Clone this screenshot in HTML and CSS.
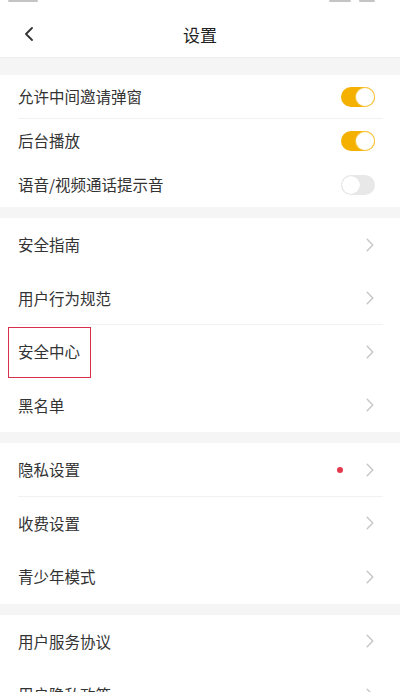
FILE: index.html
```
<!DOCTYPE html>
<html lang="zh-CN">
<head>
<meta charset="utf-8">
<meta name="viewport" content="width=device-width, initial-scale=1">
<title>设置</title>
<link rel="stylesheet" href="styles.css">
</head>
<body>
<div class="page">
  <header class="header">
    <div class="statusbar">
      <span class="sb-frag sb-left"></span>
      <span class="sb-right">
        <span class="sb-frag sb-r1"></span>
        <span class="sb-frag sb-r2"></span>
      </span>
    </div>
    <div class="navbar">
      <span class="back">
        <svg width="10" height="14" viewBox="0 0 10 14"><path d="M8 1L2 7l6 6" fill="none" stroke="#333" stroke-width="1.8" stroke-linecap="round" stroke-linejoin="round"/></svg>
      </span>
      <h1 class="title">设置</h1>
    </div>
  </header>

  <section class="group">
    <div class="row row-sm sep">
      <span class="label">允许中间邀请弹窗</span>
      <span class="toggle on"><span class="knob"></span></span>
    </div>
    <div class="row row-sm">
      <span class="label">后台播放</span>
      <span class="toggle on"><span class="knob"></span></span>
    </div>
    <div class="row row-sm">
      <span class="label">语音/视频通话提示音</span>
      <span class="toggle"><span class="knob"></span></span>
    </div>
  </section>

  <section class="group">
    <div class="row">
      <span class="label">安全指南</span>
      <svg class="chev" width="8" height="14" viewBox="0 0 8 14"><path d="M1.2 1.2L6.8 7l-5.6 5.8" fill="none" stroke="#c6c6c6" stroke-width="1.4" stroke-linecap="round" stroke-linejoin="round"/></svg>
    </div>
    <div class="row sep">
      <span class="label">用户行为规范</span>
      <svg class="chev" width="8" height="14" viewBox="0 0 8 14"><path d="M1.2 1.2L6.8 7l-5.6 5.8" fill="none" stroke="#c6c6c6" stroke-width="1.4" stroke-linecap="round" stroke-linejoin="round"/></svg>
    </div>
    <div class="row">
      <span class="label">安全中心</span>
      <span class="highlight"></span>
      <svg class="chev" width="8" height="14" viewBox="0 0 8 14"><path d="M1.2 1.2L6.8 7l-5.6 5.8" fill="none" stroke="#c6c6c6" stroke-width="1.4" stroke-linecap="round" stroke-linejoin="round"/></svg>
    </div>
    <div class="row">
      <span class="label">黑名单</span>
      <svg class="chev" width="8" height="14" viewBox="0 0 8 14"><path d="M1.2 1.2L6.8 7l-5.6 5.8" fill="none" stroke="#c6c6c6" stroke-width="1.4" stroke-linecap="round" stroke-linejoin="round"/></svg>
    </div>
  </section>

  <section class="group">
    <div class="row sep">
      <span class="label">隐私设置</span>
      <span class="dot"></span>
      <svg class="chev" width="8" height="14" viewBox="0 0 8 14"><path d="M1.2 1.2L6.8 7l-5.6 5.8" fill="none" stroke="#c6c6c6" stroke-width="1.4" stroke-linecap="round" stroke-linejoin="round"/></svg>
    </div>
    <div class="row">
      <span class="label">收费设置</span>
      <svg class="chev" width="8" height="14" viewBox="0 0 8 14"><path d="M1.2 1.2L6.8 7l-5.6 5.8" fill="none" stroke="#c6c6c6" stroke-width="1.4" stroke-linecap="round" stroke-linejoin="round"/></svg>
    </div>
    <div class="row">
      <span class="label">青少年模式</span>
      <svg class="chev" width="8" height="14" viewBox="0 0 8 14"><path d="M1.2 1.2L6.8 7l-5.6 5.8" fill="none" stroke="#c6c6c6" stroke-width="1.4" stroke-linecap="round" stroke-linejoin="round"/></svg>
    </div>
  </section>

  <section class="group">
    <div class="row">
      <span class="label">用户服务协议</span>
      <svg class="chev" width="8" height="14" viewBox="0 0 8 14"><path d="M1.2 1.2L6.8 7l-5.6 5.8" fill="none" stroke="#c6c6c6" stroke-width="1.4" stroke-linecap="round" stroke-linejoin="round"/></svg>
    </div>
    <div class="row">
      <span class="label">用户隐私政策</span>
      <svg class="chev" width="8" height="14" viewBox="0 0 8 14"><path d="M1.2 1.2L6.8 7l-5.6 5.8" fill="none" stroke="#c6c6c6" stroke-width="1.4" stroke-linecap="round" stroke-linejoin="round"/></svg>
    </div>
  </section>
</div>
</body>
</html>
```

FILE: styles.css
```
* { box-sizing: border-box; }

html, body {
  margin: 0;
  padding: 0;
  background: #f5f5f5;
}

body {
  font-family: "Noto Sans CJK SC", "Noto Sans", sans-serif;
  color: #333;
}

.page {
  display: flex;
  flex-direction: column;
  gap: 11px;
  width: 400px;
}

.header {
  background: #fff;
  border-bottom: 1px solid #ededed;
  margin-bottom: 6px;
}

.statusbar {
  height: 4px;
  display: flex;
  justify-content: space-between;
  align-items: flex-start;
  padding: 0 25px 0 8px;
}

.sb-frag {
  display: block;
  height: 2px;
  background: #c4c4c4;
  border-radius: 1px;
}

.sb-left { width: 30px; }

.sb-right {
  display: flex;
  gap: 8px;
}

.sb-r1 { width: 22px; }
.sb-r2 { width: 16px; }

.navbar {
  position: relative;
  height: 53px;
  padding-top: 7px;
  display: flex;
  align-items: center;
  justify-content: center;
}

.back {
  position: absolute;
  left: 24px;
  top: 23px;
  display: flex;
}

.title {
  margin: 0;
  font-size: 17px;
  font-weight: 400;
  color: #222;
  line-height: 1;
}

.group {
  background: #fff;
  display: flex;
  flex-direction: column;
}

.row {
  position: relative;
  height: 53.5px;
  display: flex;
  align-items: center;
  padding: 0 26px 0 18px;
}

.row-sm {
  height: 44px;
  padding-right: 25px;
}

.sep::after {
  content: "";
  position: absolute;
  left: 18px;
  right: 17px;
  bottom: 0;
  height: 1px;
  background: #f1f1f1;
}

.label {
  flex: 1;
  font-size: 15.5px;
  line-height: 1;
  color: #333;
}

.chev {
  display: block;
  flex: none;
}

.dot {
  width: 6px;
  height: 6px;
  border-radius: 50%;
  background: #e23a4c;
  margin-right: 23px;
}

.toggle {
  position: relative;
  flex: none;
  width: 34px;
  height: 20px;
  border-radius: 10px;
  background: #e8e8e8;
}

.toggle .knob {
  position: absolute;
  top: 1px;
  left: 1px;
  width: 18px;
  height: 18px;
  border-radius: 50%;
  background: #fff;
  box-shadow: 0 0 1px rgba(0, 0, 0, 0.12);
}

.toggle.on {
  background: #f4b102;
}

.toggle.on .knob {
  left: 15px;
  box-shadow: 0 0 0 1px #f7c84a;
}

.highlight {
  position: absolute;
  left: 8px;
  top: 2px;
  width: 83px;
  height: 51px;
  border: 1.5px solid #d8304a;
  pointer-events: none;
}
```
